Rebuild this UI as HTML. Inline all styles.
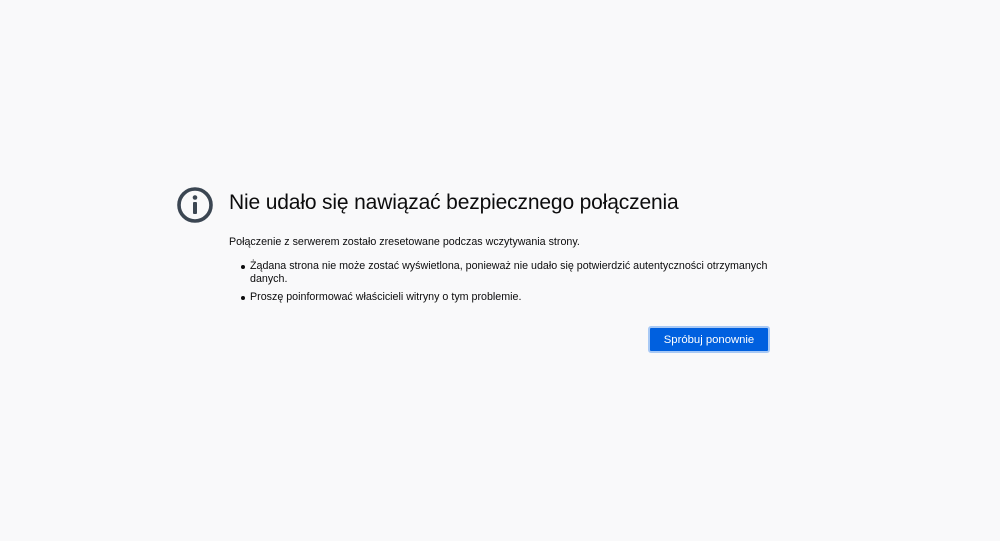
<!DOCTYPE html>
<html><head><meta charset="utf-8"><style>
html,body{margin:0;width:1000px;height:541px;background:#f9f9fa;overflow:hidden;font-family:"Liberation Sans",sans-serif;color:#0c0c0d}
svg{position:absolute;left:176px;top:186px}
h1{position:absolute;left:229px;top:191px;margin:0;font-weight:300;font-size:21px;color:#0c0c0d;letter-spacing:-0.15px;white-space:nowrap}
.p{position:absolute;left:229px;font-size:10.7px;line-height:13px;white-space:nowrap}
.dot{position:absolute;width:4px;height:4px;border-radius:50%;background:#0c0c0d}
.btn{position:absolute;left:648px;top:326px;width:118px;height:23px;background:#0060df;border:2px solid #a8c9f5;border-radius:3px;color:#fff;font-size:11.3px;text-align:center;line-height:24px}
</style></head><body>
<svg width="38" height="38" viewBox="0 0 38 38"><circle cx="19" cy="19" r="16" fill="none" stroke="#3b4652" stroke-width="3.6"/><circle cx="19" cy="11.5" r="2.3" fill="#3b4652"/><rect x="17" y="16" width="4" height="12" rx="1" fill="#3b4652"/></svg>
<h1>Nie udało się nawiązać bezpiecznego połączenia</h1>
<div class="p" style="top:236px">Połączenie z serwerem zostało zresetowane podczas wczytywania strony.</div>
<div class="dot" style="left:241px;top:265px"></div>
<div class="p" style="left:250px;top:260px">Żądana strona nie może zostać wyświetlona, ponieważ nie udało się potwierdzić autentyczności otrzymanych</div>
<div class="p" style="left:250px;top:273px">danych.</div>
<div class="dot" style="left:241px;top:296px"></div>
<div class="p" style="left:250px;top:291px">Proszę poinformować właścicieli witryny o tym problemie.</div>
<div class="btn">Spróbuj ponownie</div>
</body></html>
